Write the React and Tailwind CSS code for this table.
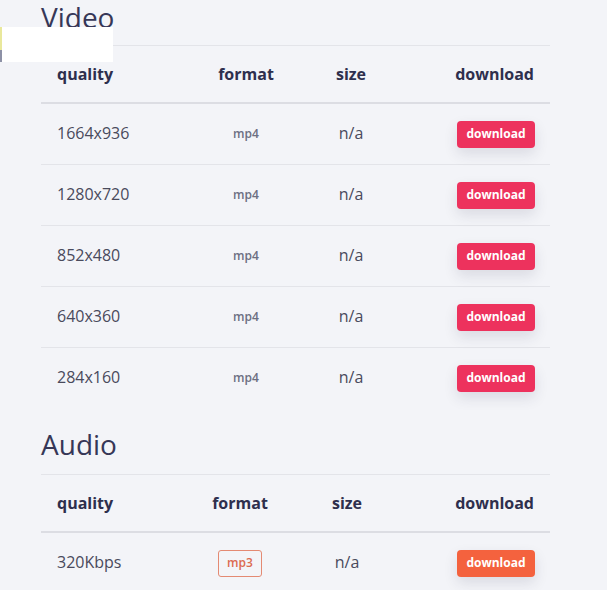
import React from 'react';

const videoRows = [
    { quality: '1664x936', format: 'mp4' },
    { quality: '1280x720', format: 'mp4' },
    { quality: '852x480', format: 'mp4' },
    { quality: '640x360', format: 'mp4' },
    { quality: '284x160', format: 'mp4' },
];

const audioRows = [
    { quality: '320Kbps', format: 'mp3' },
];

function DownloadTable({ rows, cols, audio }) {
    return (
        <div className="border-t border-[#e3e4e9]">
            <div className={`grid ${cols} border-b-2 border-[#dcdde3] text-[16px] font-bold text-[#2e2f4d]`}>
                <div className="pl-4 py-4 leading-6">quality</div>
                <div className="py-4 leading-6 text-center">format</div>
                <div className="py-4 leading-6 text-center">size</div>
                <div className="pr-4 py-4 leading-6 text-right">download</div>
            </div>
            {rows.map((row, i) => (
                <div key={row.quality}
                    className={`grid ${cols} items-center box-content h-[60px] ${i > 0 ? 'border-t border-[#e3e4e9]' : ''}`}>
                    <div className="pl-4 text-[16px] text-[#494a5c] leading-6 -mt-[2px]">{row.quality}</div>
                    <div className="flex justify-center">
                        {audio ? (
                            <span className="border border-[#e48a73] rounded-[3px] px-2 h-[27px] flex items-center text-[12px] font-semibold text-[#dc6a50]">
                                {row.format}
                            </span>
                        ) : (
                            <span className="text-[12px] font-semibold text-[#6c6f82] leading-6">{row.format}</span>
                        )}
                    </div>
                    <div className="text-center text-[16px] text-[#494a5c] leading-6 -mt-[2px]">n/a</div>
                    <div className="flex justify-end pr-[15px]">
                        <button className={`${audio ? 'bg-[#f4623e]' : 'bg-[#ed325d]'} text-white text-[12px] font-bold w-[78px] h-[27px] rounded-[4px] shadow-[0_6px_14px_rgba(40,40,70,0.12)]`}>
                            download
                        </button>
                    </div>
                </div>
            ))}
        </div>
    );
}

export default function App() {
    return (
        <div className="relative min-h-[590px] bg-[#f3f4f8] font-['Open_Sans',sans-serif] overflow-hidden">
            <div className="absolute left-0 top-[27px] w-[113px] h-[35px] bg-white flex">
                <div className="w-[2px] h-full flex flex-col">
                    <div className="flex-1 bg-[#e9e89c]"></div>
                    <div className="h-[12px] bg-[#8d91a6]"></div>
                </div>
            </div>

            <div className="ml-[41px] w-[509px]">
                <h2 className="text-[28px] leading-[34px] text-[#363757] mb-[11px]">Video</h2>
                <DownloadTable rows={videoRows} cols="grid-cols-[164px_82px_128px_135px]" />

                <h2 className="text-[28px] leading-[34px] text-[#363757] mt-[19px] mb-[13px]">Audio</h2>
                <DownloadTable rows={audioRows} cols="grid-cols-[159px_80px_134px_136px]" audio />
            </div>
        </div>
    );
}
